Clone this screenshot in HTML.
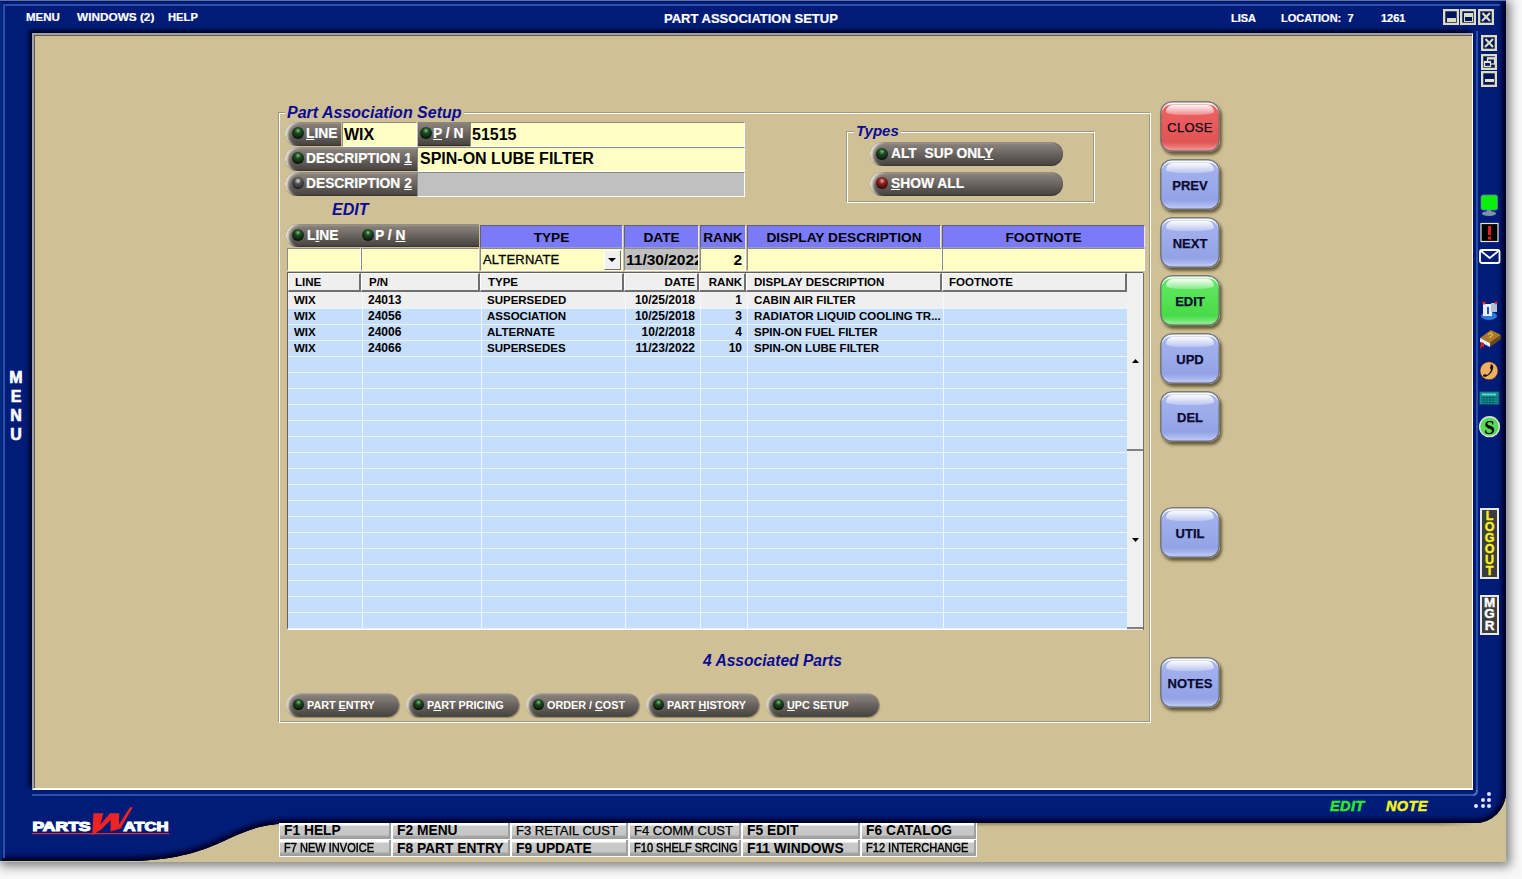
<!DOCTYPE html>
<html><head><meta charset="utf-8">
<style>
*{box-sizing:border-box}
html,body{margin:0;padding:0}
body{width:1522px;height:879px;position:relative;overflow:hidden;background:#f8f8f8;font-family:"Liberation Sans",sans-serif}
.a{position:absolute}
.w{color:#fff;font-weight:bold;-webkit-text-stroke:.2px #fff}
/* dark metallic pill */
.pill{position:absolute;border-radius:12px 0 0 12px;background:linear-gradient(#8d857f 0%,#7a736e 30%,#5e5955 65%,#45413c 100%);box-shadow:inset 4px 1px 3px -1px rgba(255,248,230,.85),inset 0 1px 0 rgba(60,55,50,.5),inset 0 -1px 1px rgba(0,0,0,.3)}
.pill.r{border-radius:12px}
.led{position:absolute;width:12px;height:12px;border-radius:50%;background:radial-gradient(circle at 50% 30%,#a0d0a0 0,#4a884a 12%,#1e4622 30%,#123014 56%,#081208 74%,#000 100%)}
.led.off{background:radial-gradient(circle at 50% 32%,#f0f0f0 0,#a0a0a0 14%,#505050 32%,#3a3a3a 58%,#141414 80%,#000 100%)}
.led.red{background:radial-gradient(circle at 50% 32%,#f8c0c0 0,#c06060 14%,#8a2020 32%,#601414 58%,#200606 80%,#000 100%)}
.pl{position:absolute;color:#fff;font-weight:bold;font-size:13.8px;line-height:16px;white-space:nowrap;-webkit-text-stroke:.2px #fff}
.u{text-decoration:underline;text-underline-offset:1px}
.fld{position:absolute;background:#ffffc4;border-top:1px solid #8a8a8a;border-left:1px solid #8a8a8a;border-bottom:1px solid #fff;border-right:1px solid #fff;font-weight:bold;font-size:16px;color:#000;white-space:nowrap;overflow:hidden}
.hdr{position:absolute;background:#7b7bfa;border-top:1px solid #606070;border-left:1px solid #606070;border-right:1px solid #e8e8f0;border-bottom:1px solid #9a9ac8;font-weight:bold;font-size:13.7px;text-align:center;line-height:16px;padding-top:4px;color:#000}
.gb{position:absolute;border:1px solid #fff;box-shadow:-1px -1px 0 #a09880, inset -1px -1px 0 #a09880}
.gt{position:absolute;color:#0a0a96;font-weight:bold;font-style:italic;font-size:16px;background:#cfc195;padding:0 2px;line-height:18px;white-space:nowrap}
.btn{position:absolute;width:60px;height:51px;border-radius:12px;box-shadow:inset 0 0 0 1.5px rgba(100,100,95,.85),inset 0 2.5px 0 1px rgba(255,255,255,.85),inset 0 -3px 2px rgba(255,255,255,.3),2px 3px 3px rgba(50,40,10,.65);text-align:center;font-size:13.5px;line-height:16px;padding-top:19px;color:#0a0a30;font-weight:bold;-webkit-text-stroke:.25px #0a0a30}
.btn::before{content:"";position:absolute;left:6px;right:6px;top:4px;height:10px;border-radius:8px 8px 40% 40%;background:linear-gradient(rgba(255,255,255,.95),rgba(255,255,255,.25))}
.bb{background:linear-gradient(#e8ecfc 0,#a6b4ee 10%,#9aaaea 50%,#92a2e4 80%,#b2bef2 93%,#8c98d0 100%)}
.br{background:linear-gradient(#f8e0e0 0,#ea6464 10%,#e85a5a 50%,#e05454 80%,#ec8080 93%,#c05050 100%);font-weight:normal;color:#100808;letter-spacing:.3px}
.bg{background:linear-gradient(#e0fce0 0,#62e862 10%,#52e252 50%,#48da48 80%,#80ec80 93%,#40b040 100%)}
.row{position:absolute;left:288px;width:839px;height:16px;font-weight:bold;font-size:11.5px;line-height:16px;color:#000;white-space:nowrap}
.c{position:absolute;top:0}
.fk{position:absolute;height:16px;background:linear-gradient(#fdfdfd 0,#fdfdfd 12%,#c8c8c8 20%,#c4c4c4 80%,#9a9a9a 100%);border-right:2px solid #a8a8a8;font-size:13px;line-height:16px;color:#000;padding-left:5px;white-space:nowrap;font-weight:bold}
.fk.n{font-weight:normal;font-size:12px;letter-spacing:-.2px}
.bpill{position:absolute;top:693px;width:113px;height:24px;border-radius:12px;background:linear-gradient(#8d857f 0%,#7a736e 30%,#5e5955 65%,#45413c 100%);box-shadow:inset 4px 1px 3px -1px rgba(255,248,230,.8),1px 1px 1px rgba(40,30,10,.35)}
.sbx{position:absolute;width:16px;height:16px;border:2px solid #dcdcc0;background:#00145e;box-shadow:inset 0 0 0 .5px #8a8a70}
</style></head><body>

<!-- window shadow -->
<div class="a" style="left:0;top:0;width:1506px;height:862px;box-shadow:2px 2px 10px 2px rgba(0,0,0,.5);background:#cfc195"></div>

<!-- tan bottom strip -->
<div class="a" style="left:0;top:790px;width:1506px;height:72px;background:#cfc195"></div>

<div class="a" style="left:260px;top:823px;width:1215px;height:4px;background:linear-gradient(rgba(40,30,10,.35),rgba(40,30,10,0));-webkit-mask-image:linear-gradient(90deg,transparent 0,#000 40px,#000 1180px,transparent 1215px)"></div>
<!-- blue frame via svg -->
<svg class="a" style="left:0;top:0" width="1522" height="879">
 <defs>
  <linearGradient id="rg" x1="0" y1="0" x2="1" y2="0"><stop offset="0" stop-color="#000c50" stop-opacity="0"/><stop offset="1" stop-color="#000838"/></linearGradient>
  <linearGradient id="bg2" x1="0" y1="0" x2="0" y2="1"><stop offset="0" stop-color="#000c50" stop-opacity="0"/><stop offset="1" stop-color="#000838"/></linearGradient>
  <filter id="bl" x="-5%" y="-5%" width="110%" height="110%"><feGaussianBlur stdDeviation="2.2"/></filter>
  <clipPath id="fc"><path d="M0,0 H1506 V792 A31,31 0 0 1 1475,823 H300 C262,823 248,830 230,838 C205,850 180,860 130,861 H0 Z"/></clipPath>
 </defs>
 <path d="M0,0 H1506 V792 A31,31 0 0 1 1475,823 H300 C262,823 248,830 230,838 C205,850 180,860 130,861 H0 Z" fill="#001c78"/>
 <g clip-path="url(#fc)">
  <path d="M0,861 H130 C180,860 205,850 230,838 C248,830 262,823 300,823 H1475 A31,31 0 0 0 1506,792 V0" fill="none" stroke="#000630" stroke-width="9" filter="url(#bl)"/>
  <path d="M0,861 H130 C180,860 205,850 230,838 C248,830 262,823 300,823 H1475 A31,31 0 0 0 1506,792 V0" fill="none" stroke="#000428" stroke-width="3"/>
  <rect x="0" y="0" width="2" height="861" fill="#002a82"/>
  <rect x="0" y="0" width="1506" height="1" fill="#5a70b0"/>
  <rect x="0" y="1" width="1506" height="1" fill="#001450"/>
  <rect x="3" y="4" width="1497" height="2" fill="#2c50a8"/>
  <rect x="3" y="4" width="2" height="854" fill="#2c50a8"/>
  <rect x="1476" y="31" width="2" height="760" fill="#2c50a8"/>
  <rect x="32" y="794" width="1442" height="2" fill="#2c50a8"/>
  <path d="M1477,790 Q1477,795 1473,795" fill="none" stroke="#4a70c0" stroke-width="2"/>
 </g>
</svg>

<!-- tan work area with borders -->
<div class="a" style="left:32px;top:33px;width:1441px;height:757px;background:#cfc195;border-top:2px solid #a0a0a8;border-left:2px solid #a0a0a8;border-right:1px solid #fff;border-bottom:2px solid #fff;box-shadow:inset 1px 1px 0 #605850,-3px -3px 4px 0 rgba(0,0,30,.95)"></div>
<!-- top menu -->
<div class="a w" style="left:26px;top:10px;font-size:11.5px;line-height:14px">MENU</div>
<div class="a w" style="left:77px;top:10px;font-size:11.8px;line-height:14px">WINDOWS (2)</div>
<div class="a w" style="left:168px;top:10px;font-size:11.2px;line-height:14px">HELP</div>
<div class="a w" style="left:664px;top:12px;font-size:13px;line-height:14px">PART ASSOCIATION SETUP</div>
<div class="a w" style="left:1231px;top:11px;font-size:11px;line-height:14px">LISA</div>
<div class="a w" style="left:1281px;top:11px;font-size:11px;line-height:14px;white-space:pre">LOCATION:  7</div>
<div class="a w" style="left:1381px;top:11px;font-size:11px;line-height:14px">1261</div>

<!-- title bar buttons -->
<div class="sbx" style="left:1443px;top:9px"></div>
<div class="a" style="left:1447px;top:18px;width:9px;height:3.5px;background:#dcdcc0"></div>
<div class="sbx" style="left:1460px;top:9px"></div>
<div class="a" style="left:1464px;top:13px;width:9px;height:9px;border:1.5px solid #dcdcc0;border-top-width:4px"></div>
<div class="sbx" style="left:1478px;top:9px"></div>
<svg class="a" style="left:1480px;top:11px" width="12" height="12"><path d="M2.5,2 L10,10 M10,2 L2,10" stroke="#dcdcc0" stroke-width="2.2"/></svg>

<!-- right side strip buttons -->
<div class="sbx" style="left:1481px;top:35px"></div>
<svg class="a" style="left:1483px;top:37px" width="12" height="12"><path d="M2.5,2 L10,10 M10,2 L2,10" stroke="#dcdcc0" stroke-width="2.2"/></svg>
<div class="sbx" style="left:1481px;top:54px"></div>
<svg class="a" style="left:1481px;top:54px" width="16" height="16"><rect x="6.5" y="4" width="7" height="6" fill="none" stroke="#e6e4cc" stroke-width="1.2"/><rect x="6" y="3.5" width="8" height="2" fill="#e6e4cc"/><rect x="3.5" y="7.5" width="6" height="5" fill="#001a70" stroke="#e6e4cc" stroke-width="1.2"/><rect x="3" y="7" width="7" height="2" fill="#e6e4cc"/></svg>
<div class="sbx" style="left:1481px;top:71px"></div>
<div class="a" style="left:1485px;top:79px;width:9px;height:3px;background:#e6e4cc"></div>

<!-- MENU vertical -->
<div class="a w" style="left:6px;top:368px;width:20px;text-align:center;font-size:16px;line-height:19px;font-weight:bold;-webkit-text-stroke:.6px #fff">M<br>E<br>N<br>U</div>


<!-- main group box -->
<div class="gb" style="left:279px;top:113px;width:872px;height:610px"></div>
<div class="gt" style="left:285px;top:104px">Part Association Setup</div>

<!-- row 1 -->
<div class="pill" style="left:285px;top:122px;width:56px;height:24px"></div>
<div class="led" style="left:292px;top:127px"></div>
<div class="pl" style="left:306px;top:126px"><span class="u">L</span>INE</div>
<div class="fld" style="left:342px;top:122px;width:75px;height:25px;padding:2px 0 0 1px;line-height:20px">WIX</div>
<div class="pill" style="left:418px;top:122px;width:52px;height:24px;border-radius:0;box-shadow:inset 0 -1px 1px rgba(0,0,0,.35)"></div>
<div class="led" style="left:420px;top:127px"></div>
<div class="pl" style="left:433px;top:126px"><span class="u">P</span> / N</div>
<div class="fld" style="left:470px;top:122px;width:275px;height:25px;padding:2px 0 0 1px;line-height:20px">51515</div>
<!-- row 2 -->
<div class="pill" style="left:285px;top:147px;width:132px;height:24px"></div>
<div class="led" style="left:292px;top:152px"></div>
<div class="pl" style="left:306px;top:151px">DESCRIPTION <span class="u">1</span></div>
<div class="fld" style="left:417px;top:147px;width:328px;height:25px;padding:1px 0 0 2px;line-height:20px">SPIN-ON LUBE FILTER</div>
<!-- row 3 -->
<div class="pill" style="left:285px;top:172px;width:132px;height:24px"></div>
<div class="led off" style="left:292px;top:177px"></div>
<div class="pl" style="left:306px;top:176px">DESCRIPTION <span class="u">2</span></div>
<div class="fld" style="left:417px;top:172px;width:328px;height:25px;background:#c0c0c0"></div>

<div class="a" style="left:332px;top:201px;color:#0a0a96;font-weight:bold;font-style:italic;font-size:16px;line-height:18px">EDIT</div>

<!-- types group -->
<div class="gb" style="left:847px;top:132px;width:248px;height:71px"></div>
<div class="gt" style="left:854px;top:122px;font-size:15px">Types</div>
<div class="pill r" style="left:870px;top:142px;width:193px;height:24px"></div>
<div class="led" style="left:876px;top:148px"></div>
<div class="pl" style="left:891px;top:146px;white-space:pre">ALT  SUP ONL<span class="u">Y</span></div>
<div class="pill r" style="left:870px;top:172px;width:193px;height:24px"></div>
<div class="led red" style="left:876px;top:177px"></div>
<div class="pl" style="left:891px;top:176px"><span class="u">S</span>HOW ALL</div>

<!-- edit header bar -->
<div class="pill" style="left:286px;top:224px;width:193px;height:23px;border-radius:11px 0 0 11px"></div>
<div class="led" style="left:292px;top:229px"></div>
<div class="pl" style="left:307px;top:228px">L<span class="u">I</span>NE</div>
<div class="led" style="left:362px;top:229px"></div>
<div class="pl" style="left:375px;top:228px">P / <span class="u">N</span></div>
<div class="hdr" style="left:480px;top:225px;width:143px;height:23px">TYPE</div>
<div class="hdr" style="left:624px;top:225px;width:75px;height:23px">DATE</div>
<div class="hdr" style="left:700px;top:225px;width:46px;height:23px">RANK</div>
<div class="hdr" style="left:747px;top:225px;width:194px;height:23px">DISPLAY DESCRIPTION</div>
<div class="hdr" style="left:942px;top:225px;width:203px;height:23px">FOOTNOTE</div>

<!-- input row -->
<div class="fld" style="left:287px;top:248px;width:74px;height:23px"></div>
<div class="fld" style="left:361px;top:248px;width:118px;height:23px"></div>
<div class="fld" style="left:480px;top:248px;width:143px;height:23px;font-weight:normal;font-size:13px;line-height:21px;padding-left:2px;letter-spacing:.2px;-webkit-text-stroke:.3px #000">ALTERNATE</div>
<div class="a" style="left:604px;top:250px;width:17px;height:20px;background:#f0f0f0;border-top:1px solid #fff;border-left:1px solid #fff;border-right:1px solid #707070;border-bottom:1px solid #707070"></div>
<svg class="a" style="left:607px;top:257px" width="10" height="6"><path d="M1,1 H9 L5,5 Z" fill="#000"/></svg>
<div class="fld" style="left:624px;top:248px;width:75px;height:23px;background:#c0c0c0;font-size:15.5px;line-height:21px;padding-left:1px">11/30/2022</div>
<div class="fld" style="left:700px;top:248px;width:46px;height:23px;font-size:15.5px;line-height:21px;text-align:right;padding-right:3px">2</div>
<div class="fld" style="left:747px;top:248px;width:195px;height:23px"></div>
<div class="fld" style="left:942px;top:248px;width:203px;height:23px"></div>

<!-- grid -->
<div class="a" style="left:287px;top:272px;width:857px;height:358px;background:#c6defc;border-top:1px solid #606060;border-left:1px solid #606060;border-bottom:2px solid #fff;border-right:1px solid #fff"></div>
<div class="a" style="left:288px;top:292px;width:839px;height:16px;background:#efefef"></div>
<div class="a" style="left:288px;top:308px;width:839px;height:1px;background:#e4f6fd"></div>
<div class="a" style="left:288px;top:324px;width:839px;height:1px;background:#e4f6fd"></div>
<div class="a" style="left:288px;top:340px;width:839px;height:1px;background:#e4f6fd"></div>
<div class="a" style="left:288px;top:356px;width:839px;height:1px;background:#e4f6fd"></div>
<div class="a" style="left:288px;top:372px;width:839px;height:1px;background:#e4f6fd"></div>
<div class="a" style="left:288px;top:388px;width:839px;height:1px;background:#e4f6fd"></div>
<div class="a" style="left:288px;top:404px;width:839px;height:1px;background:#e4f6fd"></div>
<div class="a" style="left:288px;top:420px;width:839px;height:1px;background:#e4f6fd"></div>
<div class="a" style="left:288px;top:436px;width:839px;height:1px;background:#e4f6fd"></div>
<div class="a" style="left:288px;top:452px;width:839px;height:1px;background:#e4f6fd"></div>
<div class="a" style="left:288px;top:468px;width:839px;height:1px;background:#e4f6fd"></div>
<div class="a" style="left:288px;top:484px;width:839px;height:1px;background:#e4f6fd"></div>
<div class="a" style="left:288px;top:500px;width:839px;height:1px;background:#e4f6fd"></div>
<div class="a" style="left:288px;top:516px;width:839px;height:1px;background:#e4f6fd"></div>
<div class="a" style="left:288px;top:532px;width:839px;height:1px;background:#e4f6fd"></div>
<div class="a" style="left:288px;top:548px;width:839px;height:1px;background:#e4f6fd"></div>
<div class="a" style="left:288px;top:564px;width:839px;height:1px;background:#e4f6fd"></div>
<div class="a" style="left:288px;top:580px;width:839px;height:1px;background:#e4f6fd"></div>
<div class="a" style="left:288px;top:596px;width:839px;height:1px;background:#e4f6fd"></div>
<div class="a" style="left:288px;top:612px;width:839px;height:1px;background:#e4f6fd"></div>
<div class="a" style="left:288px;top:628px;width:839px;height:1px;background:#e4f6fd"></div>
<div class="a" style="left:362px;top:292px;width:1px;height:336px;background:#eef8ff"></div>
<div class="a" style="left:481px;top:292px;width:1px;height:336px;background:#eef8ff"></div>
<div class="a" style="left:625px;top:292px;width:1px;height:336px;background:#eef8ff"></div>
<div class="a" style="left:700px;top:292px;width:1px;height:336px;background:#eef8ff"></div>
<div class="a" style="left:747px;top:292px;width:1px;height:336px;background:#eef8ff"></div>
<div class="a" style="left:943px;top:292px;width:1px;height:336px;background:#eef8ff"></div>
<div class="a" style="left:288px;top:273px;width:73px;height:19px;background:#efefef;border-top:1px solid #fff;border-left:1px solid #fff;border-right:2px solid #707070;border-bottom:2px solid #707070;font-weight:bold;font-size:11.5px;line-height:16px;text-align:left;padding-left:6px;white-space:nowrap">LINE</div>
<div class="a" style="left:361px;top:273px;width:119px;height:19px;background:#efefef;border-top:1px solid #fff;border-left:1px solid #fff;border-right:2px solid #707070;border-bottom:2px solid #707070;font-weight:bold;font-size:11.5px;line-height:16px;text-align:left;padding-left:7px;white-space:nowrap">P/N</div>
<div class="a" style="left:480px;top:273px;width:144px;height:19px;background:#efefef;border-top:1px solid #fff;border-left:1px solid #fff;border-right:2px solid #707070;border-bottom:2px solid #707070;font-weight:bold;font-size:11.5px;line-height:16px;text-align:left;padding-left:7px;white-space:nowrap">TYPE</div>
<div class="a" style="left:624px;top:273px;width:75px;height:19px;background:#efefef;border-top:1px solid #fff;border-left:1px solid #fff;border-right:2px solid #707070;border-bottom:2px solid #707070;font-weight:bold;font-size:11.5px;line-height:16px;text-align:right;padding-right:2px;white-space:nowrap">DATE</div>
<div class="a" style="left:699px;top:273px;width:47px;height:19px;background:#efefef;border-top:1px solid #fff;border-left:1px solid #fff;border-right:2px solid #707070;border-bottom:2px solid #707070;font-weight:bold;font-size:11.5px;line-height:16px;text-align:right;padding-right:2px;white-space:nowrap">RANK</div>
<div class="a" style="left:746px;top:273px;width:196px;height:19px;background:#efefef;border-top:1px solid #fff;border-left:1px solid #fff;border-right:2px solid #707070;border-bottom:2px solid #707070;font-weight:bold;font-size:11.5px;line-height:16px;text-align:left;padding-left:7px;white-space:nowrap">DISPLAY DESCRIPTION</div>
<div class="a" style="left:942px;top:273px;width:185px;height:19px;background:#efefef;border-top:1px solid #fff;border-left:1px solid #fff;border-right:2px solid #707070;border-bottom:2px solid #707070;font-weight:bold;font-size:11.5px;line-height:16px;text-align:left;padding-left:6px;white-space:nowrap">FOOTNOTE</div>
<div class="a" style="left:1127px;top:273px;width:17px;height:357px;background:#f0f0f0;border-right:1px solid #707070"></div>
<div class="a" style="left:1127px;top:449px;width:16px;height:2px;background:#808080"></div>
<div class="a" style="left:1127px;top:627px;width:16px;height:2px;background:#808080"></div>
<svg class="a" style="left:1131px;top:358px" width="9" height="6"><path d="M1,5 H8 L4.5,1 Z" fill="#000"/></svg>
<svg class="a" style="left:1131px;top:537px" width="9" height="6"><path d="M1,1 H8 L4.5,5 Z" fill="#000"/></svg>
<div class="a gtx" style="left:294px;top:292px;font-size:11.5px">WIX</div>
<div class="a gtx" style="left:368px;top:292px;font-size:12px">24013</div>
<div class="a gtx" style="left:487px;top:292px;font-size:11.5px">SUPERSEDED</div>
<div class="a gtx" style="left:625px;width:70px;top:292px;font-size:12px;text-align:right">10/25/2018</div>
<div class="a gtx" style="left:702px;width:40px;top:292px;font-size:12px;text-align:right">1</div>
<div class="a gtx" style="left:754px;top:292px;font-size:11.5px">CABIN AIR FILTER</div>
<div class="a gtx" style="left:294px;top:308px;font-size:11.5px">WIX</div>
<div class="a gtx" style="left:368px;top:308px;font-size:12px">24056</div>
<div class="a gtx" style="left:487px;top:308px;font-size:11.5px">ASSOCIATION</div>
<div class="a gtx" style="left:625px;width:70px;top:308px;font-size:12px;text-align:right">10/25/2018</div>
<div class="a gtx" style="left:702px;width:40px;top:308px;font-size:12px;text-align:right">3</div>
<div class="a gtx" style="left:754px;top:308px;font-size:11.5px">RADIATOR LIQUID COOLING TR...</div>
<div class="a gtx" style="left:294px;top:324px;font-size:11.5px">WIX</div>
<div class="a gtx" style="left:368px;top:324px;font-size:12px">24006</div>
<div class="a gtx" style="left:487px;top:324px;font-size:11.5px">ALTERNATE</div>
<div class="a gtx" style="left:625px;width:70px;top:324px;font-size:12px;text-align:right">10/2/2018</div>
<div class="a gtx" style="left:702px;width:40px;top:324px;font-size:12px;text-align:right">4</div>
<div class="a gtx" style="left:754px;top:324px;font-size:11.5px">SPIN-ON FUEL FILTER</div>
<div class="a gtx" style="left:294px;top:340px;font-size:11.5px">WIX</div>
<div class="a gtx" style="left:368px;top:340px;font-size:12px">24066</div>
<div class="a gtx" style="left:487px;top:340px;font-size:11.5px">SUPERSEDES</div>
<div class="a gtx" style="left:625px;width:70px;top:340px;font-size:12px;text-align:right">11/23/2022</div>
<div class="a gtx" style="left:702px;width:40px;top:340px;font-size:12px;text-align:right">10</div>
<div class="a gtx" style="left:754px;top:340px;font-size:11.5px">SPIN-ON LUBE FILTER</div>
<style>.gtx{font-weight:bold;line-height:16px;color:#000;white-space:nowrap}</style>
<div class="btn br" style="left:1160px;top:101px;font-size:13px">CLOSE</div>
<div class="btn bb" style="left:1160px;top:159px;font-size:13px">PREV</div>
<div class="btn bb" style="left:1160px;top:217px;font-size:13px">NEXT</div>
<div class="btn bg" style="left:1160px;top:275px;font-size:13px">EDIT</div>
<div class="btn bb" style="left:1160px;top:333px;font-size:13px">UPD</div>
<div class="btn bb" style="left:1160px;top:391px;font-size:13px">DEL</div>
<div class="btn bb" style="left:1160px;top:507px;font-size:13px">UTIL</div>
<div class="btn bb" style="left:1160px;top:657px;font-size:13px">NOTES</div>
<div class="a" style="left:703px;top:652px;color:#0a0a96;font-weight:bold;font-style:italic;font-size:15.6px;line-height:18px;white-space:nowrap">4 Associated Parts</div>
<div class="bpill" style="left:286px"></div>
<div class="led" style="left:293px;top:699px;width:11px;height:11px"></div>
<div class="pl" style="left:307px;top:697px;font-size:10.8px;-webkit-text-stroke:0">PART <span class="u">E</span>NTRY</div>
<div class="bpill" style="left:406px"></div>
<div class="led" style="left:413px;top:699px;width:11px;height:11px"></div>
<div class="pl" style="left:427px;top:697px;font-size:10.8px;-webkit-text-stroke:0">P<span class="u">A</span>RT PRICING</div>
<div class="bpill" style="left:526px"></div>
<div class="led" style="left:533px;top:699px;width:11px;height:11px"></div>
<div class="pl" style="left:547px;top:697px;font-size:10.8px;-webkit-text-stroke:0">ORDER / <span class="u">C</span>OST</div>
<div class="bpill" style="left:646px"></div>
<div class="led" style="left:653px;top:699px;width:11px;height:11px"></div>
<div class="pl" style="left:667px;top:697px;font-size:10.8px;-webkit-text-stroke:0">PART <span class="u">H</span>ISTORY</div>
<div class="bpill" style="left:766px"></div>
<div class="led" style="left:773px;top:699px;width:11px;height:11px"></div>
<div class="pl" style="left:787px;top:697px;font-size:10.8px;-webkit-text-stroke:0"><span class="u">U</span>PC SETUP</div>
<div class="a" style="left:279px;top:823px;width:698px;height:34px;background:#fbfbfb"></div>
<div class="a" style="left:279px;top:823px;width:112px;height:16px;background:linear-gradient(#fff 0,#fff 2px,#c9c9c9 3px,#c6c6c6 12px,#a8a8a8 13px,#9c9c9c 100%);border-right:2px solid #a0a0a0;border-left:1px solid #fff"></div><div class="a" style="left:284px;top:823px;line-height:15px;white-space:nowrap;color:#000;font-weight:bold;font-size:13.8px">F1 HELP</div>
<div class="a" style="left:279px;top:840px;width:112px;height:16px;background:linear-gradient(#fff 0,#fff 2px,#c9c9c9 3px,#c6c6c6 12px,#a8a8a8 13px,#9c9c9c 100%);border-right:2px solid #a0a0a0;border-left:1px solid #fff"></div><div class="a" style="left:284px;top:841px;line-height:15px;white-space:nowrap;color:#000;font-size:12px;transform:scaleX(.92);transform-origin:0 0;-webkit-text-stroke:.45px #000">F7 NEW INVOICE</div>
<div class="a" style="left:392px;top:823px;width:118px;height:16px;background:linear-gradient(#fff 0,#fff 2px,#c9c9c9 3px,#c6c6c6 12px,#a8a8a8 13px,#9c9c9c 100%);border-right:2px solid #a0a0a0;border-left:1px solid #fff"></div><div class="a" style="left:397px;top:823px;line-height:15px;white-space:nowrap;color:#000;font-weight:bold;font-size:13.8px">F2 MENU</div>
<div class="a" style="left:392px;top:840px;width:118px;height:16px;background:linear-gradient(#fff 0,#fff 2px,#c9c9c9 3px,#c6c6c6 12px,#a8a8a8 13px,#9c9c9c 100%);border-right:2px solid #a0a0a0;border-left:1px solid #fff"></div><div class="a" style="left:397px;top:841px;line-height:15px;white-space:nowrap;color:#000;font-weight:bold;font-size:13.8px">F8 PART ENTRY</div>
<div class="a" style="left:511px;top:823px;width:117px;height:16px;background:linear-gradient(#fff 0,#fff 2px,#c9c9c9 3px,#c6c6c6 12px,#a8a8a8 13px,#9c9c9c 100%);border-right:2px solid #a0a0a0;border-left:1px solid #fff"></div><div class="a" style="left:516px;top:823px;line-height:15px;white-space:nowrap;color:#000;font-size:13px;-webkit-text-stroke:.25px #000">F3 RETAIL CUST</div>
<div class="a" style="left:511px;top:840px;width:117px;height:16px;background:linear-gradient(#fff 0,#fff 2px,#c9c9c9 3px,#c6c6c6 12px,#a8a8a8 13px,#9c9c9c 100%);border-right:2px solid #a0a0a0;border-left:1px solid #fff"></div><div class="a" style="left:516px;top:841px;line-height:15px;white-space:nowrap;color:#000;font-weight:bold;font-size:13.8px">F9 UPDATE</div>
<div class="a" style="left:629px;top:823px;width:112px;height:16px;background:linear-gradient(#fff 0,#fff 2px,#c9c9c9 3px,#c6c6c6 12px,#a8a8a8 13px,#9c9c9c 100%);border-right:2px solid #a0a0a0;border-left:1px solid #fff"></div><div class="a" style="left:634px;top:823px;line-height:15px;white-space:nowrap;color:#000;font-size:13px;-webkit-text-stroke:.25px #000">F4 COMM CUST</div>
<div class="a" style="left:629px;top:840px;width:112px;height:16px;background:linear-gradient(#fff 0,#fff 2px,#c9c9c9 3px,#c6c6c6 12px,#a8a8a8 13px,#9c9c9c 100%);border-right:2px solid #a0a0a0;border-left:1px solid #fff"></div><div class="a" style="left:634px;top:841px;line-height:15px;white-space:nowrap;color:#000;font-size:12px;transform:scaleX(.92);transform-origin:0 0;-webkit-text-stroke:.45px #000">F10 SHELF SRCING</div>
<div class="a" style="left:742px;top:823px;width:118px;height:16px;background:linear-gradient(#fff 0,#fff 2px,#c9c9c9 3px,#c6c6c6 12px,#a8a8a8 13px,#9c9c9c 100%);border-right:2px solid #a0a0a0;border-left:1px solid #fff"></div><div class="a" style="left:747px;top:823px;line-height:15px;white-space:nowrap;color:#000;font-weight:bold;font-size:13.8px">F5 EDIT</div>
<div class="a" style="left:742px;top:840px;width:118px;height:16px;background:linear-gradient(#fff 0,#fff 2px,#c9c9c9 3px,#c6c6c6 12px,#a8a8a8 13px,#9c9c9c 100%);border-right:2px solid #a0a0a0;border-left:1px solid #fff"></div><div class="a" style="left:747px;top:841px;line-height:15px;white-space:nowrap;color:#000;font-weight:bold;font-size:13.8px">F11 WINDOWS</div>
<div class="a" style="left:861px;top:823px;width:115px;height:16px;background:linear-gradient(#fff 0,#fff 2px,#c9c9c9 3px,#c6c6c6 12px,#a8a8a8 13px,#9c9c9c 100%);border-right:2px solid #a0a0a0;border-left:1px solid #fff"></div><div class="a" style="left:866px;top:823px;line-height:15px;white-space:nowrap;color:#000;font-weight:bold;font-size:13.8px">F6 CATALOG</div>
<div class="a" style="left:861px;top:840px;width:115px;height:16px;background:linear-gradient(#fff 0,#fff 2px,#c9c9c9 3px,#c6c6c6 12px,#a8a8a8 13px,#9c9c9c 100%);border-right:2px solid #a0a0a0;border-left:1px solid #fff"></div><div class="a" style="left:866px;top:841px;line-height:15px;white-space:nowrap;color:#000;font-size:12px;transform:scaleX(.92);transform-origin:0 0;-webkit-text-stroke:.45px #000">F12 INTERCHANGE</div>
<svg class="a" style="left:0;top:800px" width="200" height="45"><rect x="32" y="33" width="137" height="1.3" fill="#c03040"/><text x="32.5" y="30.5" textLength="58" lengthAdjust="spacingAndGlyphs" font-family="Liberation Sans" font-weight="bold" font-size="12.6" fill="#fff" stroke="#fff" stroke-width="1.1">PARTS</text><text x="123.5" y="30.5" textLength="45" lengthAdjust="spacingAndGlyphs" font-family="Liberation Sans" font-weight="bold" font-size="12.6" fill="#fff" stroke="#fff" stroke-width="1.1">ATCH</text><path d="M93.4,13.3 L103.3,13.3 L100.4,24.5 L110,13.3 L119.3,13.3 L118.9,24.5 L130,7.3 L132.8,7.3 L120.5,28.5 L110.5,31.5 L110.8,20 L101.8,29 L92.3,35.3 Z" fill="#ee2424"/></svg>
<div class="a" style="left:1330px;top:798px;color:#2ee82e;font-weight:bold;font-style:italic;font-size:14.5px;line-height:16px;letter-spacing:.4px;-webkit-text-stroke:.5px #2ee82e">EDIT</div>
<div class="a" style="left:1386px;top:798px;color:#f4f41e;font-weight:bold;font-style:italic;font-size:14.5px;line-height:16px;letter-spacing:.4px;-webkit-text-stroke:.5px #f4f41e">NOTE</div>
<div class="a" style="left:1486.5px;top:791.5px;width:4px;height:4px;border-radius:50%;background:#dfe6f6"></div>
<div class="a" style="left:1480.5px;top:797.5px;width:4px;height:4px;border-radius:50%;background:#dfe6f6"></div>
<div class="a" style="left:1486.5px;top:797.5px;width:4px;height:4px;border-radius:50%;background:#dfe6f6"></div>
<div class="a" style="left:1474.4px;top:803.6px;width:4px;height:4px;border-radius:50%;background:#dfe6f6"></div>
<div class="a" style="left:1480.5px;top:803.6px;width:4px;height:4px;border-radius:50%;background:#dfe6f6"></div>
<div class="a" style="left:1486.5px;top:803.6px;width:4px;height:4px;border-radius:50%;background:#dfe6f6"></div>
<svg class="a" style="left:1476px;top:190px" width="30" height="460"><rect x="5" y="5" width="16.5" height="15" rx="2" fill="#0af00a" stroke="#6080a0" stroke-width=".8"/><ellipse cx="13" cy="23.5" rx="7" ry="2.6" fill="#8090b0"/><rect x="11" y="20" width="4" height="2" fill="#8090b0"/><rect x="5" y="33.5" width="17" height="18" fill="#000" stroke="#e8e4c8" stroke-width="1.2"/><rect x="12" y="36" width="3" height="9" fill="#e02020"/><rect x="12" y="46.5" width="3" height="3" fill="#e02020"/><rect x="4" y="60" width="19.5" height="13" rx="2" fill="none" stroke="#fff" stroke-width="1.8"/><path d="M5,61 L13.75,68 L22.5,61" fill="none" stroke="#fff" stroke-width="1.8"/><ellipse cx="13" cy="126" rx="8" ry="4" fill="#2a7ae0"/><rect x="7" y="114" width="9" height="12" fill="#e8eef8"/><rect x="11" y="117" width="2" height="7" fill="#2050c0"/><rect x="15" y="113" width="6" height="9" fill="#b0c0d8"/><circle cx="8" cy="113" r="1.6" fill="#e03030"/><circle cx="20" cy="113" r="1.4" fill="#e03030"/><path d="M4,148 L15,140 L25,145 L14,153 Z" fill="#a87a2a"/><path d="M4,148 L14,153 L14,157 L4,152 Z" fill="#eee"/><path d="M14,153 L25,145 L25,149 L14,157 Z" fill="#6a4a1a"/><path d="M12,145 q2,-3 4,-1 q1,2 -2,3 v1" fill="none" stroke="#f0c040" stroke-width="1.2"/><path d="M5,152 L4,159 L7,156 L8,158 L8,153 Z" fill="#d02020"/><circle cx="13" cy="180.8" r="9" fill="#f0b060" stroke="#3a2a10" stroke-width=".6"/><path d="M15,174 q3,1 2,5 q-2,6 -8,8 q-2,0 -2,-2 l2,-1 l2,1 q3,-2 4,-5 l-1,-2 z" fill="#1a1208"/><rect x="3.5" y="201.7" width="19.5" height="12.8" fill="#109090" stroke="#0a4a5a" stroke-width=".8"/><rect x="6" y="203.5" width="14" height="2" fill="#60d0d0"/><path d="M5,207.5 H22 M5,210 H22 M5,212.5 H22 M8,206 V214 M11,206 V214 M14,206 V214 M17,206 V214" stroke="#0a5060" stroke-width=".7"/><circle cx="13.5" cy="236.7" r="10.6" fill="#d8e8d0"/><circle cx="13.5" cy="236.7" r="9.2" fill="#58d858"/><text x="13.5" y="243.5" text-anchor="middle" font-family="Liberation Serif" font-weight="bold" font-size="19" fill="#000">S</text></svg>
<div class="a" style="left:1480px;top:508px;width:19px;height:71px;background:#3c3c3c;border:2px solid #e8e8e8;color:#f8f020;-webkit-text-stroke:.4px #f8f020;font-weight:bold;font-size:12.5px;line-height:10.9px;text-align:center;padding-top:1px">L<br>O<br>G<br>O<br>U<br>T</div>
<div class="a" style="left:1480px;top:595px;width:19px;height:40px;background:#3c3c3c;border:2px solid #e8e8e8;color:#fff;-webkit-text-stroke:.4px #fff;font-weight:bold;font-size:13.5px;line-height:11.3px;text-align:center;padding-top:0px">M<br>G<br>R</div>
</body></html>
